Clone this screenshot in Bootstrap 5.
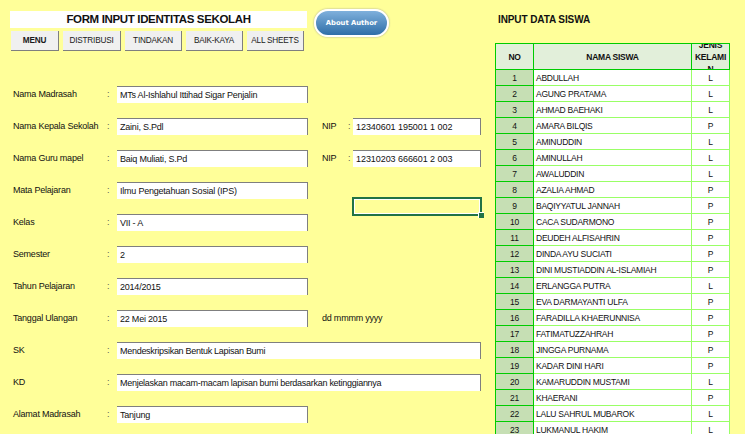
<!DOCTYPE html>
<html><head><meta charset="utf-8">
<link href="https://cdn.jsdelivr.net/npm/bootstrap@5.3.0/dist/css/bootstrap.min.css" rel="stylesheet">
<style>
html,body{height:434px;overflow:hidden}
body{background:#ffff99;font-family:"Liberation Sans",Arial,sans-serif;font-size:9px;letter-spacing:-.22px;color:#111;position:relative}
.sheet{width:745px;height:434px;overflow:hidden;align-items:flex-start}
.leftcol{width:495px;padding:11px 0 0 10px;flex:none}
.form-title{width:297px;height:17px;background:#fff;font-weight:700;font-size:11.5px;letter-spacing:-.35px;line-height:17px;text-align:center;color:#111}
.author-btn{position:absolute;left:314px;top:9px;width:75px;height:28px;border-radius:14px;background:linear-gradient(#7fb0dc,#2f6ea8);border:2px solid #fff;box-shadow:0 0 2px #999;color:#fff;font-family:"DejaVu Sans",sans-serif;font-weight:700;font-size:6.8px;letter-spacing:0;line-height:24px;text-align:center;padding:0}
.menu-row{width:297px;margin-top:3px;padding-left:1px;gap:4px}
.sheet-btn{height:20px;background:#f0f0f0;border:0;border-right:1px solid #7f7f7f;border-bottom:1px solid #7f7f7f;border-radius:0;font-size:8.2px;letter-spacing:-.2px;line-height:19px;padding:0;text-align:center;color:#1a1a1a;white-space:nowrap}
.fields{margin-top:35px;padding-left:3px;gap:15px}
.field-row{height:17px;align-items:center;white-space:nowrap}
.flabel{width:94px;flex:none}
.fcolon{width:10px;flex:none;color:#555}
.fbox{height:17px;background:#fff;border-top:1px solid #7f7f7f;border-right:1px solid #7f7f7f;line-height:16px;padding-left:3px;flex:none;color:#111}
.w-std{width:191px}
.w-wide{width:364px;letter-spacing:-.28px}
.w-nip{width:128px;letter-spacing:-.06px}
.nip-label{width:26px;margin-left:14px;flex:none}
.nip-colon{width:5px;flex:none;color:#555}
.hint{margin-left:14px}
.sel-cell{position:absolute;left:352px;top:197px;width:130px;height:19px;border:2px solid #217346;box-shadow:inset 0 0 0 1px #fff}
.sel-cell::after{content:"";position:absolute;right:-4px;bottom:-4px;width:6px;height:6px;background:#217346;border:1px solid #fff;border-right:0;border-bottom:0}
.rightcol{flex:none;width:250px}
.data-title{margin:13px 0 0 3px;font-weight:700;font-size:10px;letter-spacing:-.1px;line-height:13px;color:#111}
.data-table{width:235px;table-layout:fixed;margin:17px 0 0 0;border-collapse:collapse;background:#fff;font-size:8.5px;letter-spacing:-.25px}
.data-table td,.data-table th{border:1px solid #99ff66;padding:0;height:16px;line-height:14px;vertical-align:middle;overflow:hidden;white-space:nowrap;background:transparent;color:#111}
.data-table thead th{height:26px;background:#e2efda;border-color:#00cc00;text-align:center;font-weight:700}
.data-table .jk{line-height:12px}
.jk-wrap{height:25px;overflow:hidden;display:flex;flex-direction:column;justify-content:center}
.data-table tbody td.num{background:#c6dfb4;border-color:#00cc00;text-align:center}
.data-table td.nm{padding-left:2px}
.data-table td.sx{text-align:center}
.c-no{width:38px}.c-sx{width:38px}
</style></head><body>
<div class="sheet d-flex">
<div class="leftcol">
<div class="form-title">FORM INPUT IDENTITAS SEKOLAH</div>
<button class="author-btn" type="button">About Author</button>
<div class="menu-row d-flex">
<button class="sheet-btn fw-bold" type="button" style="width:48px">MENU</button>
<button class="sheet-btn" type="button" style="width:58px">DISTRIBUSI</button>
<button class="sheet-btn" type="button" style="width:57px">TINDAKAN</button>
<button class="sheet-btn" type="button" style="width:57px">BAIK-KAYA</button>
<button class="sheet-btn" type="button" style="width:57px">ALL SHEETS</button>
</div>
<div class="fields d-flex flex-column">
<div class="field-row d-flex"><span class="flabel">Nama Madrasah</span><span class="fcolon">:</span><div class="fbox w-std">MTs Al-Ishlahul Ittihad Sigar Penjalin</div></div>
<div class="field-row d-flex"><span class="flabel">Nama Kepala Sekolah</span><span class="fcolon">:</span><div class="fbox w-std">Zaini, S.Pdl</div><span class="nip-label">NIP</span><span class="nip-colon">:</span><div class="fbox w-nip">12340601 195001 1 002</div></div>
<div class="field-row d-flex"><span class="flabel">Nama Guru mapel</span><span class="fcolon">:</span><div class="fbox w-std">Baiq Muliati, S.Pd</div><span class="nip-label">NIP</span><span class="nip-colon">:</span><div class="fbox w-nip">12310203 666601 2 003</div></div>
<div class="field-row d-flex"><span class="flabel">Mata Pelajaran</span><span class="fcolon">:</span><div class="fbox w-std">Ilmu Pengetahuan Sosial (IPS)</div></div>
<div class="field-row d-flex"><span class="flabel">Kelas</span><span class="fcolon">:</span><div class="fbox w-std">VII - A</div></div>
<div class="field-row d-flex"><span class="flabel">Semester</span><span class="fcolon">:</span><div class="fbox w-std">2</div></div>
<div class="field-row d-flex"><span class="flabel">Tahun Pelajaran</span><span class="fcolon">:</span><div class="fbox w-std">2014/2015</div></div>
<div class="field-row d-flex"><span class="flabel">Tanggal Ulangan</span><span class="fcolon">:</span><div class="fbox w-std">22 Mei 2015</div><span class="hint">dd mmmm yyyy</span></div>
<div class="field-row d-flex"><span class="flabel">SK</span><span class="fcolon">:</span><div class="fbox w-wide">Mendeskripsikan Bentuk Lapisan Bumi</div></div>
<div class="field-row d-flex"><span class="flabel">KD</span><span class="fcolon">:</span><div class="fbox w-wide">Menjelaskan macam-macam lapisan bumi berdasarkan ketinggiannya</div></div>
<div class="field-row d-flex"><span class="flabel">Alamat Madrasah</span><span class="fcolon">:</span><div class="fbox w-std">Tanjung</div></div>
</div>
</div>
<div class="sel-cell"></div>
<div class="rightcol">
<div class="data-title">INPUT DATA SISWA</div>
<table class="data-table">
<colgroup><col class="c-no"><col><col class="c-sx"></colgroup>
<thead><tr><th>NO</th><th>NAMA SISWA</th><th class="jk"><div class="jk-wrap"><span>JENIS</span><span>KELAMI</span><span>N</span></div></th></tr></thead>
<tbody>
<tr><td class="num">1</td><td class="nm">ABDULLAH</td><td class="sx">L</td></tr>
<tr><td class="num">2</td><td class="nm">AGUNG PRATAMA</td><td class="sx">L</td></tr>
<tr><td class="num">3</td><td class="nm">AHMAD BAEHAKI</td><td class="sx">L</td></tr>
<tr><td class="num">4</td><td class="nm">AMARA BILQIS</td><td class="sx">P</td></tr>
<tr><td class="num">5</td><td class="nm">AMINUDDIN</td><td class="sx">L</td></tr>
<tr><td class="num">6</td><td class="nm">AMINULLAH</td><td class="sx">L</td></tr>
<tr><td class="num">7</td><td class="nm">AWALUDDIN</td><td class="sx">L</td></tr>
<tr><td class="num">8</td><td class="nm">AZALIA AHMAD</td><td class="sx">P</td></tr>
<tr><td class="num">9</td><td class="nm">BAQIYYATUL JANNAH</td><td class="sx">P</td></tr>
<tr><td class="num">10</td><td class="nm">CACA SUDARMONO</td><td class="sx">P</td></tr>
<tr><td class="num">11</td><td class="nm">DEUDEH ALFISAHRIN</td><td class="sx">P</td></tr>
<tr><td class="num">12</td><td class="nm">DINDA AYU SUCIATI</td><td class="sx">P</td></tr>
<tr><td class="num">13</td><td class="nm">DINI MUSTIADDIN AL-ISLAMIAH</td><td class="sx">P</td></tr>
<tr><td class="num">14</td><td class="nm">ERLANGGA PUTRA</td><td class="sx">L</td></tr>
<tr><td class="num">15</td><td class="nm">EVA DARMAYANTI ULFA</td><td class="sx">P</td></tr>
<tr><td class="num">16</td><td class="nm">FARADILLA KHAERUNNISA</td><td class="sx">P</td></tr>
<tr><td class="num">17</td><td class="nm">FATIMATUZZAHRAH</td><td class="sx">P</td></tr>
<tr><td class="num">18</td><td class="nm">JINGGA PURNAMA</td><td class="sx">P</td></tr>
<tr><td class="num">19</td><td class="nm">KADAR DINI HARI</td><td class="sx">P</td></tr>
<tr><td class="num">20</td><td class="nm">KAMARUDDIN MUSTAMI</td><td class="sx">L</td></tr>
<tr><td class="num">21</td><td class="nm">KHAERANI</td><td class="sx">P</td></tr>
<tr><td class="num">22</td><td class="nm">LALU SAHRUL MUBAROK</td><td class="sx">L</td></tr>
<tr><td class="num">23</td><td class="nm">LUKMANUL HAKIM</td><td class="sx">L</td></tr>
</tbody></table>
</div>
</div>
</body></html>
